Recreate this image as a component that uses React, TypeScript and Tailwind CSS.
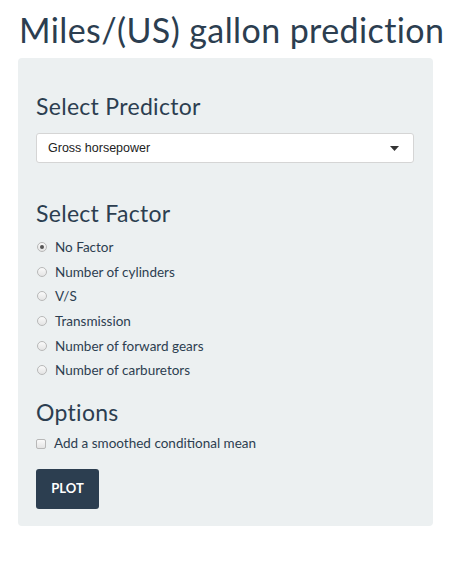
import React from "react";

const factors = [
  "No Factor",
  "Number of cylinders",
  "V/S",
  "Transmission",
  "Number of forward gears",
  "Number of carburetors",
];

const Heading = ({ children, className }: { children: React.ReactNode; className?: string }) => {
  return (
    <h3 className={`text-[23px] leading-[24px] tracking-[0.3px] text-[#2c3e50] ${className}`}>{children}</h3>
  );
};

export default function App() {
  return (
    <div className="min-h-[571px] bg-white px-[18px] font-['Lato',sans-serif] text-[#2c3e50]">
      <h1 className="pt-[12px] pl-[1px] text-[34px] leading-[35px] tracking-[0.4px]">Miles/(US) gallon prediction</h1>

      <div className="mt-[11px] w-[415px] rounded-[4px] bg-[#ecf0f1] px-[18px] pt-[36px] pb-[17px]">
        <Heading>Select Predictor</Heading>
        <div className="mt-[15px] flex h-[30px] w-[378px] items-center justify-between rounded-[3px] border border-[#d5d5d5] bg-white pl-[11px] pr-[14px] font-['Liberation_Sans',sans-serif] text-[12.5px] text-[#222]">
          <span>Gross horsepower</span>
          <svg width="9" height="5" viewBox="0 0 9 5">
            <path d="M0 0 L9 0 L4.5 5 Z" fill="#333" />
          </svg>
        </div>

        <Heading className="mt-[38px]">Select Factor</Heading>
        <div className="mt-[10px] flex flex-col">
          {factors.map((f, i) => (
            <label key={f} className="flex h-[24.6px] items-center gap-[8px] text-[13.5px]">
              <span className="ml-[1px] flex h-[10px] w-[10px] items-center justify-center rounded-full border border-[#b8b8b8] bg-gradient-to-b from-[#fafafa] to-[#e4e4e4]">
                {i === 0 && <span className="h-[4px] w-[4px] rounded-full bg-[#555]" />}
              </span>
              <span>{f}</span>
            </label>
          ))}
        </div>

        <Heading className="mt-[17px]">Options</Heading>
        <label className="mt-[8px] flex h-[24px] items-center gap-[8px] text-[13.5px]">
          <span className="h-[10px] w-[10px] rounded-[2px] border border-[#b8b8b8] bg-gradient-to-b from-[#fafafa] to-[#e4e4e4]" />
          <span>Add a smoothed conditional mean</span>
        </label>

        <button className="mt-[13px] flex h-[40px] w-[63px] items-center justify-center rounded-[3px] bg-[#2c3e50] text-[13px] font-bold text-white">
          PLOT
        </button>
      </div>
    </div>
  );
}
